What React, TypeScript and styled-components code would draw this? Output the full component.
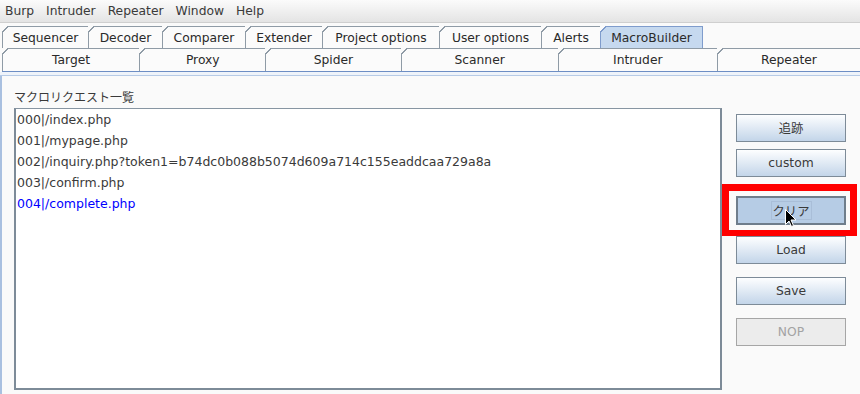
import React from "react";
import styled, { createGlobalStyle, css } from "styled-components";

const GlobalStyle = createGlobalStyle`
  html, body {
    margin: 0;
    padding: 0;
    background: #fafafa;
  }
  body {
    font-family: "DejaVu Sans", "Noto Sans CJK JP", sans-serif;
    font-size: 12px;
    color: #333;
  }
`;

// 画面全体
const Frame = styled.div`
  position: relative;
  width: 860px;
  height: 394px;
  overflow: hidden;
  background: #fafafa;
`;

// メニューバー
const MenuBar = styled.div`
  display: flex;
  height: 22px;
  align-items: center;
  padding-left: 5px;
  gap: 12px;
  background: linear-gradient(#fbfbfb, #e4e4e4);
  border-bottom: 1px solid #cfcfcf;
`;
const MenuItem = styled.span`
  font-size: 12.3px;
  color: #3a3a3a;
`;

// タブ
const TabArea = styled.div`
  padding: 3px 0 0 2px;
`;
const TabRow = styled.div<{ $row: number }>`
  display: flex;
  height: ${(p) => (p.$row === 1 ? 22 : 23)}px;
  ${(p) =>
    p.$row === 2 &&
    css`
      border-bottom: 1px solid #6d8ec4;
    `}
`;
const Tab = styled.div<{ $w: number; $active?: boolean; $row: number }>`
  position: relative;
  box-sizing: border-box;
  flex: 0 0 ${(p) => p.$w}px;
  display: flex;
  align-items: center;
  justify-content: center;
  font-size: 12.3px;
  color: #2a2a2a;
  background: ${(p) => (p.$active ? "#c6d9ef" : "#fbfbfb")};
  border: 1px solid ${(p) => (p.$active ? "#7f9ccc" : "#8f9ba6")};
  border-bottom: none;
  margin-right: -1px;
  ${(p) =>
    p.$row === 2 &&
    css`
      flex: 1 1 ${p.$w}px;
      border-top: 1px solid #8f9ba6;
    `}
  &::before {
    content: "";
    position: absolute;
    left: -1px;
    top: -1px;
    width: 6px;
    height: 6px;
    background: linear-gradient(
      135deg,
      #fafafa 0,
      #fafafa 48%,
      ${(p) => (p.$active ? "#7f9ccc" : "#8f9ba6")} 48%,
      ${(p) => (p.$active ? "#7f9ccc" : "#8f9ba6")} 62%,
      transparent 62%
    );
  }
`;
const TabBand = styled.div`
  height: 3px;
  background: #eef3fa;
  border-bottom: 1px solid #b7cbe6;
`;

// 本体
const Body = styled.div`
  display: flex;
  height: 318px;
  border-left: 2px solid #a9c0e0;
  background: #fafafa;
`;
const ListPane = styled.div`
  display: flex;
  flex-direction: column;
  padding: 14px 0 0 12px;
`;
const Caption = styled.div`
  font-size: 12px;
  color: #3a3a3a;
  height: 18px;
  line-height: 16px;
`;
const ListBox = styled.div`
  box-sizing: border-box;
  width: 708px;
  height: 282px;
  background: #fff;
  border-top: 1px solid #8795a2;
  border-left: 2px solid #7d8b98;
  border-right: 2px solid #7d8b98;
  border-bottom: 2px solid #7d8b98;
`;
const ListItem = styled.div<{ $selected?: boolean }>`
  height: 21px;
  line-height: 21px;
  padding-left: 1px;
  font-size: 12.5px;
  color: ${(p) => (p.$selected ? "#0000ff" : "#3a3a3a")};
  white-space: nowrap;
`;

const ButtonColumn = styled.div`
  display: flex;
  flex-direction: column;
  padding: 38px 0 0 14px;
`;
const Button = styled.div<{ $state?: "pressed" | "disabled"; $gap?: number }>`
  box-sizing: border-box;
  width: 110px;
  height: 28px;
  margin-top: ${(p) => p.$gap ?? 0}px;
  display: flex;
  align-items: center;
  justify-content: center;
  font-size: 12.3px;
  color: #3a3a3a;
  border: 1px solid #7d8b98;
  background: linear-gradient(#fdfeff, #c3d5e9);
  ${(p) =>
    p.$state === "pressed" &&
    css`
      height: 29px;
      border: 2px solid #6f7d8b;
      background: #b6cce5;
    `}
  ${(p) =>
    p.$state === "disabled" &&
    css`
      border: 1px solid #a6a6a6;
      background: #ececec;
      color: #a3a3a3;
    `}
`;
const FocusLabel = styled.span`
  display: flex;
  align-items: center;
  justify-content: center;
  box-sizing: border-box;
  width: 41px;
  height: 19px;
  border: 1px solid #a9bed8;
`;

// 注目枠（赤）
const Highlight = styled.div`
  position: absolute;
  left: 722px;
  top: 184px;
  width: 135px;
  height: 52px;
  box-sizing: border-box;
  border: 7px solid #ff0000;
  border-bottom-width: 6px;
  pointer-events: none;
`;
const Cursor = styled.svg`
  position: absolute;
  left: 785px;
  top: 209px;
`;

const menus = ["Burp", "Intruder", "Repeater", "Window", "Help"];

const topTabs = [
  { name: "Sequencer", w: 87 },
  { name: "Decoder", w: 75 },
  { name: "Comparer", w: 84 },
  { name: "Extender", w: 78 },
  { name: "Project options", w: 118 },
  { name: "User options", w: 103 },
  { name: "Alerts", w: 60 },
  { name: "MacroBuilder", w: 103, active: true },
];

const bottomTabs = [
  { name: "Target", w: 138 },
  { name: "Proxy", w: 127 },
  { name: "Spider", w: 136 },
  { name: "Scanner", w: 158 },
  { name: "Intruder", w: 160 },
  { name: "Repeater", w: 144 },
];

const requests = [
  "000|/index.php",
  "001|/mypage.php",
  "002|/inquiry.php?token1=b74dc0b088b5074d609a714c155eaddcaa729a8a",
  "003|/confirm.php",
  "004|/complete.php",
];

const App = () => {
  return (
    <>
      <GlobalStyle />
      <Frame>
        <MenuBar>
          {menus.map((m) => (
            <MenuItem key={m}>{m}</MenuItem>
          ))}
        </MenuBar>
        <TabArea>
          <TabRow $row={1}>
            {topTabs.map((t) => (
              <Tab key={t.name} $w={t.w} $row={1} $active={t.active}>
                {t.name}
              </Tab>
            ))}
          </TabRow>
          <TabRow $row={2}>
            {bottomTabs.map((t) => (
              <Tab key={t.name} $w={t.w} $row={2}>
                {t.name}
              </Tab>
            ))}
          </TabRow>
        </TabArea>
        <TabBand />
        <Body>
          <ListPane>
            <Caption>マクロリクエスト一覧</Caption>
            <ListBox>
              {requests.map((r, i) => (
                <ListItem key={r} $selected={i === requests.length - 1}>
                  {r}
                </ListItem>
              ))}
            </ListBox>
          </ListPane>
          <ButtonColumn>
            <Button>追跡</Button>
            <Button $gap={7}>custom</Button>
            <Button $gap={19} $state="pressed">
              <FocusLabel>クリア</FocusLabel>
            </Button>
            <Button $gap={11}>Load</Button>
            <Button $gap={13}>Save</Button>
            <Button $gap={13} $state="disabled">
              NOP
            </Button>
          </ButtonColumn>
        </Body>
        <Highlight />
        <Cursor width="12" height="19" viewBox="0 0 12 19">
          <path
            d="M0.5 0.5 L0.5 15.5 L4 12 L6.5 17.5 L8.5 16.5 L6 11 L11 11 Z"
            fill="#000"
            stroke="#fff"
            strokeWidth="1"
          />
        </Cursor>
      </Frame>
    </>
  );
};

export default App;
